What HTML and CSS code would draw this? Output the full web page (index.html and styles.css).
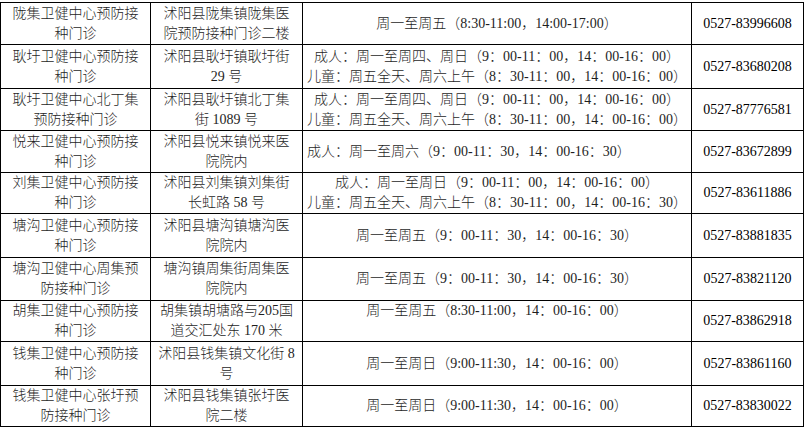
FILE: index.html
```html
<!DOCTYPE html>
<html lang="zh-CN">
<head>
<meta charset="utf-8">
<title>接种门诊</title>
<link rel="stylesheet" href="styles.css">
</head>
<body>
<table class="clinics">
  <colgroup>
    <col class="c-name">
    <col class="c-addr">
    <col class="c-time">
    <col class="c-tel">
  </colgroup>
  <tbody>
    <tr>
      <td>陇集卫健中心预防接<br>种门诊</td>
      <td>沭阳县陇集镇陇集医<br>院预防接种门诊二楼</td>
      <td class="time">周一至周五（8:30-11:00，14:00-17:00）</td>
      <td class="tel">0527-83996608</td>
    </tr>
    <tr class="h44">
      <td>耿圩卫健中心预防接<br>种门诊</td>
      <td>沭阳县耿圩镇耿圩街<br>29 号</td>
      <td class="time">成人：周一至周四、周日（9：00-11：00，14：00-16：00）<br>儿童：周五全天、周六上午（8：30-11：00，14：00-16：00）</td>
      <td class="tel">0527-83680208</td>
    </tr>
    <tr>
      <td>耿圩卫健中心北丁集<br>预防接种门诊</td>
      <td>沭阳县耿圩镇北丁集<br>街 1089 号</td>
      <td class="time">成人：周一至周四、周日（9：00-11：00，14：00-16：00）<br>儿童：周五全天、周六上午（8：30-11：00，14：00-16：00）</td>
      <td class="tel">0527-87776581</td>
    </tr>
    <tr>
      <td>悦来卫健中心预防接<br>种门诊</td>
      <td>沭阳县悦来镇悦来医<br>院院内</td>
      <td class="time left">成人：周一至周六（9：00-11：30，14：00-16：30）</td>
      <td class="tel">0527-83672899</td>
    </tr>
    <tr class="h41">
      <td>刘集卫健中心预防接<br>种门诊</td>
      <td>沭阳县刘集镇刘集街<br>长虹路 58 号</td>
      <td class="time">成人：周一至周日（9：00-11：00，14：00-16：00）<br>儿童：周五全天、周六上午（8：30-11：00，14：00-16：30）</td>
      <td class="tel">0527-83611886</td>
    </tr>
    <tr class="h44">
      <td>塘沟卫健中心预防接<br>种门诊</td>
      <td>沭阳县塘沟镇塘沟医<br>院院内</td>
      <td class="time">周一至周五（9：00-11：30，14：00-16：30）</td>
      <td class="tel">0527-83881835</td>
    </tr>
    <tr class="h43">
      <td>塘沟卫健中心周集预<br>防接种门诊</td>
      <td>塘沟镇周集街周集医<br>院院内</td>
      <td class="time">周一至周五（9：00-11：30，14：00-16：30）</td>
      <td class="tel">0527-83821120</td>
    </tr>
    <tr class="h41">
      <td>胡集卫健中心预防接<br>种门诊</td>
      <td>胡集镇胡塘路与205国<br>道交汇处东 170 米</td>
      <td class="time top">周一至周五（8:30-11:00，14：00-16：00）</td>
      <td class="tel">0527-83862918</td>
    </tr>
    <tr class="h44">
      <td>钱集卫健中心预防接<br>种门诊</td>
      <td>沭阳县钱集镇文化街 8<br>号</td>
      <td class="time">周一至周日（9:00-11:30，14：00-16：00）</td>
      <td class="tel">0527-83861160</td>
    </tr>
    <tr class="h40">
      <td>钱集卫健中心张圩预<br>防接种门诊</td>
      <td>沭阳县钱集镇张圩医<br>院二楼</td>
      <td class="time">周一至周日（9:00-11:30，14：00-16：00）</td>
      <td class="tel">0527-83830022</td>
    </tr>
  </tbody>
</table>
</body>
</html>
```

FILE: styles.css
```css
html, body {
  margin: 0;
  padding: 0;
  background: #ffffff;
}

body {
  padding-top: 2px;
}

.clinics {
  border-collapse: collapse;
  table-layout: fixed;
  width: 803px;
  font-family: "Liberation Serif", "Noto Sans CJK SC", serif;
  font-size: 14px;
  line-height: 20px;
  color: #1e1e1e;
}

.c-name { width: 150px; }
.c-addr { width: 152px; }
.c-time { width: 389px; }
.c-tel  { width: 112px; }

.clinics td {
  border: 1px solid #000;
  padding: 0 6px;
  height: 41px;
  text-align: center;
  vertical-align: middle;
  white-space: nowrap;
  font-weight: 300;
}

.clinics tr.h40 td { height: 39px; }
.clinics tr.h41 td { height: 40px; }
.clinics tr.h43 td { height: 42px; }
.clinics tr.h44 td { height: 43px; }

.clinics td.time {
  padding: 0 4px;
}

.clinics td.left {
  text-align: left;
}

.clinics td.top {
  vertical-align: top;
}

.clinics td.tel {
  color: #000;
  font-weight: 400;
}
```
